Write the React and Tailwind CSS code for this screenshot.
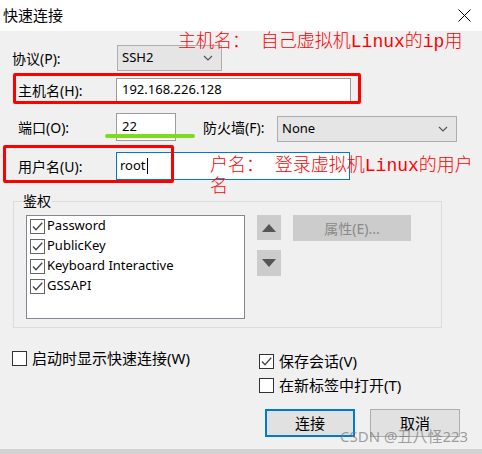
import React from 'react'

const Chevron = () => (
  <svg width="10" height="6" viewBox="0 0 10 6" className="shrink-0">
    <path d="M1 1 L5 5 L9 1" fill="none" stroke="#555" strokeWidth="1.2" />
  </svg>
)

function Select({ value, className }) {
  return (
    <div className={`flex items-center justify-between bg-[#e5e5e5] border border-[#adadad] pl-[4px] pr-[8px] ${className}`}>
      <span className="text-[13px] text-black">{value}</span>
      <Chevron />
    </div>
  )
}

function Check({ checked, dark }) {
  return (
    <span className={`w-[15px] h-[15px] shrink-0 bg-white border ${dark ? 'border-[#333]' : 'border-[#666]'} flex items-center justify-center`}>
      {checked && (
        <svg width="13" height="13" viewBox="0 0 13 13">
          <path d="M2 6.5 L5 9.8 L11.2 2.8" fill="none" stroke="#444" strokeWidth="1.3" />
        </svg>
      )}
    </span>
  )
}

const AUTH = ['Password', 'PublicKey', 'Keyboard Interactive', 'GSSAPI']

export default function App() {
  return (
    <div className="relative w-[482px] h-[454px] overflow-hidden bg-[#f0f0f0] text-black font-[family-name:'Noto_Sans','Noto_Sans_CJK_SC',sans-serif]">
      {/* Title bar */}
      <div className="h-[31px] bg-white flex items-center justify-between pl-[3px] pr-[11px]">
        <span className="text-[15px] leading-none">快速连接</span>
        <svg width="13" height="13" viewBox="0 0 13 13">
          <path d="M0.5 0.5 L12.5 12.5 M12.5 0.5 L0.5 12.5" stroke="#000" strokeWidth="1" />
        </svg>
      </div>

      <div className="h-[418px] flex flex-col">
        {/* 协议 */}
        <div className="flex items-center h-[26px] mt-[14px]">
          <span className="pl-[12px] w-[117px] text-[14px]">协议(P):</span>
          <Select value="SSH2" className="w-[105px] h-[26px]" />
        </div>

        {/* 主机名 */}
        <div className="flex items-center h-[24px] mt-[7px]">
          <span className="pl-[18px] w-[116px] text-[14px]">主机名(H):</span>
          <div className="w-[235px] h-[24px] bg-white border border-[#9c9c9c] flex items-center pl-[5px] text-[13px]">
            192.168.226.128
          </div>
        </div>

        {/* 端口 / 防火墙 */}
        <div className="flex items-start h-[29px] mt-[11px]">
          <span className="pl-[18px] w-[116px] h-[28px] flex items-center text-[14px]">端口(O):</span>
          <div className="w-[60px] h-[28px] bg-white border border-[#9c9c9c] flex items-center pl-[5px] text-[13px]">22</div>
          <span className="ml-[27px] w-[74px] h-[28px] flex items-center text-[14px]">防火墙(F):</span>
          <Select value="None" className="w-[180px] h-[26px] mt-[3px]" />
        </div>

        {/* 用户名 */}
        <div className="flex items-center h-[28px] mt-[10px]">
          <span className="pl-[18px] w-[116px] text-[14px]">用户名(U):</span>
          <div className="w-[234px] h-[28px] bg-white border border-[#0078d7] flex items-center pl-[3px] text-[13px]">
            root<span className="w-px h-[16px] bg-black ml-px" />
          </div>
        </div>

        {/* 鉴权 */}
        <fieldset className="ml-[13px] mt-[12px] w-[429px] h-[136px] border border-[#dcdcdc] pl-[12px] pt-[5px]">
          <legend className="ml-[-4px] px-[1px] text-[14px] leading-[18px]">鉴权</legend>
          <div className="flex items-start">
            <div className="w-[219px] h-[104px] bg-white border border-[#828790] pl-[3px]">
              {AUTH.map(a => (
                <div key={a} className="h-[20px] flex items-center gap-[2px] text-[13px]">
                  <Check checked />
                  <span>{a}</span>
                </div>
              ))}
            </div>
            <div className="ml-[12px] flex flex-col gap-[10px]">
              <div className="w-[24px] h-[25px] bg-[#cccccc] flex items-center justify-center">
                <svg width="14" height="8" viewBox="0 0 14 8"><path d="M0 8 L7 0 L14 8 Z" fill="#555" /></svg>
              </div>
              <div className="w-[24px] h-[26px] bg-[#cccccc] flex items-center justify-center">
                <svg width="14" height="8" viewBox="0 0 14 8"><path d="M0 0 L14 0 L7 8 Z" fill="#555" /></svg>
              </div>
            </div>
            <div className="ml-[12px] w-[118px] h-[26px] bg-[#cccccc] flex items-center justify-center text-[14px] text-[#8a8a8a]">
              属性(E)...
            </div>
          </div>
        </fieldset>

        {/* Bottom options */}
        <div className="flex mt-[22px]">
          <div className="w-[259px] pl-[12px]">
            <label className="flex items-center gap-[5px] h-[16px] text-[15px]">
              <Check dark />
              <span>启动时显示快速连接(W)</span>
            </label>
          </div>
          <div className="flex flex-col">
            <label className="flex items-center gap-[5px] h-[16px] mt-[3px] text-[15px]">
              <Check checked dark />
              <span>保存会话(V)</span>
            </label>
            <label className="flex items-center gap-[5px] h-[16px] mt-[8px] text-[15px]">
              <Check dark />
              <span>在新标签中打开(T)</span>
            </label>
            <div className="flex gap-[15px] mt-[16px] ml-[6px]">
              <button className="w-[90px] h-[28px] bg-[#e1e1e1] border-2 border-[#0078d7] text-[15px]">连接</button>
              <button className="w-[90px] h-[28px] bg-[#e1e1e1] border border-[#adadad] text-[15px]">取消</button>
            </div>
          </div>
        </div>
      </div>
      <div className="h-[5px] bg-[#d2d2d2]" />

      {/* Annotations drawn over the screenshot */}
      <div className="absolute left-[13px] top-[73px] w-[348px] h-[31px] border-[3px] border-[#ff0000] rounded-[2px]" />
      <div className="absolute left-[3px] top-[145px] w-[171px] h-[38px] border-[3px] border-[#ff0000] rounded-[2px]" />
      <div className="absolute left-[105px] top-[134px] w-[90px] h-[4px] rounded-full bg-[#7cdb1c]" />
      <div className="absolute left-[178px] top-[32px] whitespace-nowrap text-[18px] leading-[20px] font-light text-[#ff0000] font-[family-name:'Liberation_Mono','Noto_Sans_CJK_SC',monospace]">
        主机名： 自己虚拟机Linux的ip用
      </div>
      <div className="absolute left-[210px] top-[156px] whitespace-nowrap text-[18px] leading-[21px] font-light text-[#ff0000] font-[family-name:'Liberation_Mono','Noto_Sans_CJK_SC',monospace]">
        户名： 登录虚拟机Linux的用户<br />名
      </div>
      <div className="absolute left-[340px] top-[427px] text-[15px] leading-[18px] text-[rgba(120,120,120,0.7)]">
        CSDN @丑八怪223
      </div>
    </div>
  )
}
